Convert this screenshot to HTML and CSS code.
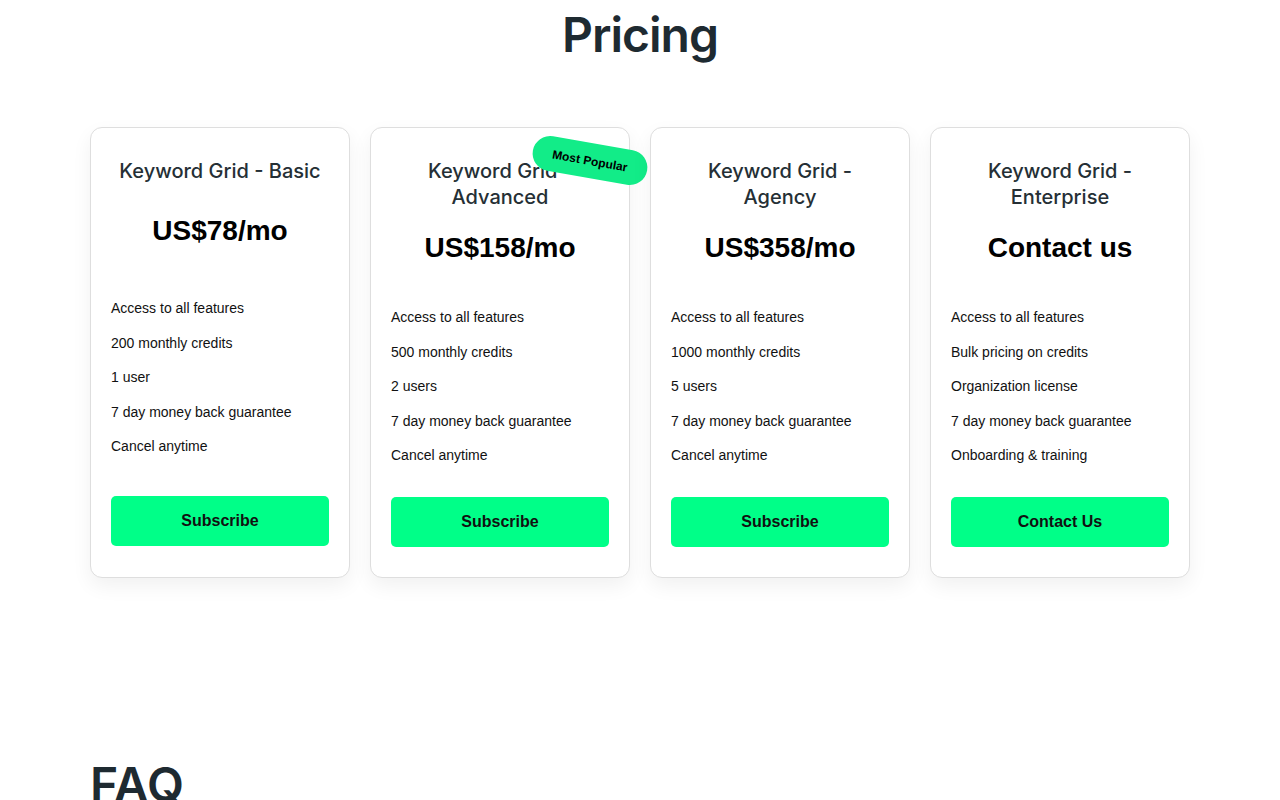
FILE: index.html
```html
<!DOCTYPE html>
<html lang="en">
<head>
<meta charset="utf-8">
<title>Pricing</title>
<link rel="stylesheet" href="styles.css">
</head>
<body>
<section class="pricing">
  <h1 class="pricing-title">Pricing</h1>
  <div class="plans">
    <div class="plan">
      <h3 class="plan-name">Keyword Grid - Basic</h3>
      <div class="plan-price">US$78/mo</div>
      <ul class="plan-features">
        <li>Access to all features</li>
        <li>200 monthly credits</li>
        <li>1 user</li>
        <li>7 day money back guarantee</li>
        <li>Cancel anytime</li>
      </ul>
      <a class="plan-btn" href="#">Subscribe</a>
    </div>
    <div class="plan">
      <span class="badge">Most Popular</span>
      <h3 class="plan-name">Keyword Grid - Advanced</h3>
      <div class="plan-price">US$158/mo</div>
      <ul class="plan-features">
        <li>Access to all features</li>
        <li>500 monthly credits</li>
        <li>2 users</li>
        <li>7 day money back guarantee</li>
        <li>Cancel anytime</li>
      </ul>
      <a class="plan-btn" href="#">Subscribe</a>
    </div>
    <div class="plan">
      <h3 class="plan-name">Keyword Grid - Agency</h3>
      <div class="plan-price">US$358/mo</div>
      <ul class="plan-features">
        <li>Access to all features</li>
        <li>1000 monthly credits</li>
        <li>5 users</li>
        <li>7 day money back guarantee</li>
        <li>Cancel anytime</li>
      </ul>
      <a class="plan-btn" href="#">Subscribe</a>
    </div>
    <div class="plan">
      <h3 class="plan-name">Keyword Grid - Enterprise</h3>
      <div class="plan-price">Contact us</div>
      <ul class="plan-features">
        <li>Access to all features</li>
        <li>Bulk pricing on credits</li>
        <li>Organization license</li>
        <li>7 day money back guarantee</li>
        <li>Onboarding &amp; training</li>
      </ul>
      <a class="plan-btn" href="#">Contact Us</a>
    </div>
  </div>
</section>
<section class="faq">
  <h2 class="faq-title">FAQ</h2>
</section>
</body>
</html>
```
FILE: styles.css
```css
* { box-sizing: border-box; }
html, body { margin: 0; padding: 0; background: #fff; }
body {
  font-family: "Liberation Sans", Arial, sans-serif;
  color: #111;
  overflow: hidden;
  height: 800px;
}
.pricing {
  width: 1100px;
  margin: 0 auto;
  padding-top: 6px;
}
.pricing-title {
  margin: 0;
  font-family: Inter, "Noto Sans", sans-serif;
  font-weight: 600;
  font-size: 48px;
  line-height: 58px;
  letter-spacing: -1px;
  color: #1e2a31;
  text-align: center;
}
.plans {
  margin-top: 63px;
  display: grid;
  grid-template-columns: repeat(4, 1fr);
  gap: 20px;
}
.plan {
  position: relative;
  display: flex;
  flex-direction: column;
  justify-content: space-between;
  padding: 30px 20px;
  background: #fff;
  border: 1px solid #dedede;
  border-radius: 12px;
  box-shadow: 0 8px 20px rgba(0, 0, 0, 0.06);
}
.plan-name {
  margin: 0;
  font-family: Inter, "Noto Sans", sans-serif;
  font-weight: 500;
  font-size: 20px;
  line-height: 26px;
  color: #252f35;
  text-align: center;
}
.plan-price {
  margin-top: 22px;
  font-weight: 700;
  font-size: 28px;
  line-height: 32px;
  color: #000;
  text-align: center;
}
.plan-features {
  list-style: none;
  margin: 36px 0 0;
  padding: 0;
  font-size: 14px;
}
.plan-features li {
  padding: 9px 0;
  line-height: 16.5px;
}
.plan-btn {
  display: flex;
  align-items: center;
  justify-content: center;
  margin-top: 24px;
  height: 50px;
  background: #00ff88;
  border-radius: 5px;
  color: #111;
  font-weight: 700;
  font-size: 16px;
  text-decoration: none;
}
.badge {
  position: absolute;
  top: 15px;
  left: 161px;
  width: 116px;
  height: 35px;
  display: flex;
  align-items: center;
  justify-content: center;
  background: #12ec88;
  border-radius: 18px;
  font-weight: 700;
  font-size: 12px;
  color: #000;
  transform: rotate(10deg);
}
.faq {
  width: 1100px;
  margin: 178px auto 0;
}
.faq-title {
  margin: 0;
  font-family: Inter, "Noto Sans", sans-serif;
  font-weight: 600;
  font-size: 48px;
  line-height: 58px;
  color: #1e2a31;
}
```
